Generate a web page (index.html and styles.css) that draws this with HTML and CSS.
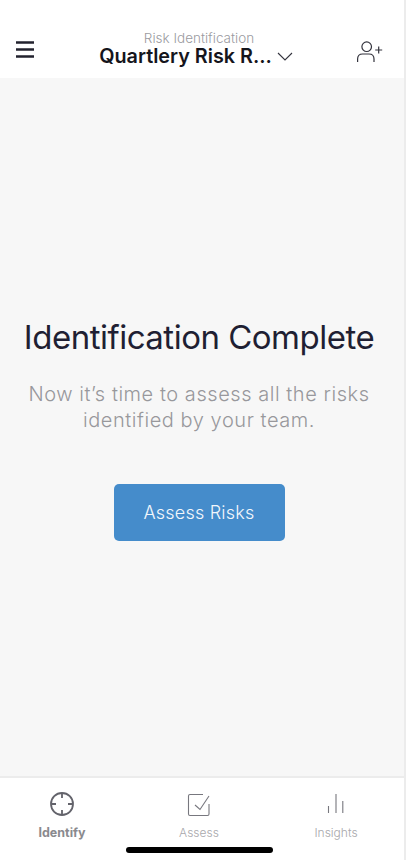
FILE: index.html
```html
<!DOCTYPE html>
<html lang="en">
<head>
    <meta charset="UTF-8">
    <meta name="viewport" content="width=device-width, initial-scale=1.0">
    <title>Risk Identification</title>
    <link rel="stylesheet" href="styles.css">
</head>
<body>
    <div class="app">
        <header class="topbar">
            <svg class="menu-icon" width="18" height="17" viewBox="0 0 18 17"><path d="M0 1.500h18M0 8.500h18M0 15.500h18" stroke="#22222e" stroke-width="2.500" fill="none"/></svg>
            <div class="title-box">
                <div class="subtitle">Risk Identification</div>
                <div class="title-row">
                    <span class="title">Quartlery Risk R...</span>
                    <svg width="16" height="9" viewBox="0 0 16 9"><path d="M1 1l7 7 7-7" stroke="#33333d" stroke-width="1.100" fill="none"/></svg>
                </div>
            </div>
            <svg class="invite-icon" width="26" height="22" viewBox="0 0 26 22"><g stroke="#33333d" stroke-width="1.200" fill="none"><circle cx="9.700" cy="5.700" r="4.800"/><path d="M0.600 21v-3c0-3 2-5 5-5h6.400c3 0 5 2 5 5v3"/><path d="M18.200 9h7M21.700 5.500v7"/></g></svg>
        </header>
        <main class="content">
            <h1>Identification Complete</h1>
            <p>Now it’s time to assess all the risks identified by your team.</p>
            <a class="btn" href="#">Assess Risks</a>
        </main>
        <nav class="tabs">
            <a class="tab active" href="#">
                <svg width="26" height="26" viewBox="0 0 26 26"><g stroke="#63636b" fill="none" stroke-width="1.800"><circle cx="13" cy="13" r="11"/><path d="M13 2v5M13 19v5M2 13h5M19 13h5"/></g></svg>
                <span>Identify</span>
            </a>
            <a class="tab" href="#">
                <svg width="24" height="26" viewBox="0 0 24 26"><g stroke="#77777e" fill="none" stroke-width="1.100"><path d="M16 3.500H3a1.500 1.500 0 0 0-1.500 1.500v18a1.500 1.500 0 0 0 1.500 1.500h17.500a1.500 1.500 0 0 0 1.500-1.500V13"/><path d="M8 14l5 4.500L22 5"/></g></svg>
                <span>Assess</span>
            </a>
            <a class="tab" href="#">
                <svg width="18" height="26" viewBox="0 0 18 26"><path d="M1.500 15v7M9 3v19M15.800 10v12" stroke="#77777e" stroke-width="1.100" fill="none"/></svg>
                <span>Insights</span>
            </a>
            <div class="home-bar"></div>
        </nav>
    </div>
</body>
</html>
```

FILE: styles.css
```css
html, body { margin: 0; padding: 0; height: 100%; }
body { font-family: Inter, "Liberation Sans", sans-serif; background: #fff; }

.app { width: 404px; height: 860px; display: flex; flex-direction: column; border-right: 2px solid #ececec; }

.topbar { height: 78px; box-sizing: border-box; padding: 20px 21px 0 16px; background: #fff; display: flex; align-items: center; justify-content: space-between; }
.menu-icon { flex: none; }
.invite-icon { flex: none; margin-top: 6px; }
.title-box { text-align: center; }
.subtitle { font-size: 13.500px; line-height: 14px; color: #9b9b9f; font-weight: 300; padding-left: 7px; }
.title-row { display: flex; align-items: center; justify-content: center; gap: 5px; padding-left: 1px; }
.title { font-size: 19.800px; line-height: 22px; font-weight: 600; color: #15151c; }

.content { flex: 1; background: #f7f7f7; display: flex; flex-direction: column; align-items: center; padding: 238px 6px 0 0; box-sizing: border-box; }
.content h1 { margin: 0; font-size: 33px; line-height: 42px; font-weight: 400; color: #1f1f33; letter-spacing: -0.5px; white-space: nowrap; }
.content p { margin: 23px 0 0; width: 380px; text-align: center; font-size: 20px; line-height: 26px; font-weight: 300; color: #98989c; letter-spacing: 0.55px; }
.btn { margin-top: 51px; width: 171px; height: 57px; border-radius: 5px; background: #458ccb; color: #f2f7fb; font-size: 18px; font-weight: 300; letter-spacing: 0.2px; text-decoration: none; display: flex; align-items: center; justify-content: center; }

.tabs { position: relative; height: 84px; box-sizing: border-box; padding: 0 18px 0 12px; border-top: 2px solid #ececec; background: #fff; display: flex; justify-content: space-between; }
.tab { width: 100px; display: flex; flex-direction: column; align-items: center; padding-top: 13px; text-decoration: none; font-size: 12px; font-weight: 300; color: #a8a8ac; }
.tab svg { height: 26px; }
.tab span { margin-top: 8px; line-height: 16px; }
.tab.active { color: #8a8a8e; font-weight: 700; font-size: 12.500px; }
.home-bar { position: absolute; left: 126px; top: 69px; width: 147px; height: 6px; border-radius: 3px; background: #000; }
```
